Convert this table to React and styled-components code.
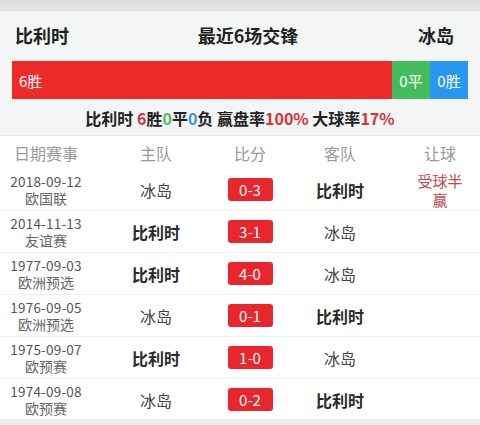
import React from "react";
import styled, { createGlobalStyle } from "styled-components";

const GlobalStyle = createGlobalStyle`
  html, body {
    margin: 0;
    padding: 0;
    background: #ececec;
    font-family: "Noto Sans CJK SC", "Noto Sans", "Liberation Sans", sans-serif;
  }
`;

const matches = [
  { date: "2018-09-12", cup: "欧国联", home: "冰岛", score: "0-3", away: "比利时", winHome: false, handicap: "受球半赢" },
  { date: "2014-11-13", cup: "友谊赛", home: "比利时", score: "3-1", away: "冰岛", winHome: true },
  { date: "1977-09-03", cup: "欧洲预选", home: "比利时", score: "4-0", away: "冰岛", winHome: true },
  { date: "1976-09-05", cup: "欧洲预选", home: "冰岛", score: "0-1", away: "比利时", winHome: false },
  { date: "1975-09-07", cup: "欧预赛", home: "比利时", score: "1-0", away: "冰岛", winHome: true },
  { date: "1974-09-08", cup: "欧预赛", home: "冰岛", score: "0-2", away: "比利时", winHome: false },
];

const Page = styled.div`
  width: 480px;
  height: 425px;
  overflow: hidden;
  background: #ececec;
`;

const TopStrip = styled.div`
  height: 11px;
  background: linear-gradient(#dcdcdc, #e3e3e3);
`;

const Summary = styled.div`
  background: #f4f5f5;
  padding: 11px 12px 6px;
  border-bottom: 1px solid #ebebeb;
`;

const TitleRow = styled.div`
  display: grid;
  grid-template-columns: 1fr auto 1fr;
  align-items: center;
  height: 26px;
  padding: 0 14px 0 3px;
  font-size: 18px;
  font-weight: bold;
  color: #222;

  span:nth-child(2) {
    padding-left: 27px;
  }
  span:last-child {
    text-align: right;
  }
`;

const Bar = styled.div`
  display: flex;
  height: 38px;
  margin-top: 13px;
  color: #fff;
  font-size: 15px;
`;

const Segment = styled.div`
  display: flex;
  align-items: center;
  justify-content: ${(p) => (p.$left ? "flex-start" : "center")};
  padding-left: ${(p) => (p.$left ? "7px" : "0")};
  background: ${(p) => p.$color};
  flex: ${(p) => (p.$grow ? 1 : "none")};
  width: ${(p) => p.$width || "auto"};
`;

const Stats = styled.div`
  text-align: center;
  margin-top: 8px;
  font-size: 16px;
  font-weight: bold;
  color: #222;
  line-height: 22px;
`;

const Num = styled.span`
  color: ${(p) => p.$color};
`;

const Table = styled.div`
  background: #fff;
  display: grid;
  grid-template-columns: 92px 128px 60px 120px 80px;
  height: 283px;
`;

const HeadCell = styled.div`
  height: 33px;
  display: flex;
  align-items: center;
  justify-content: center;
  color: #9a9a9a;
  font-size: 16px;
`;

const Cell = styled.div`
  height: 41px;
  border-top: ${(p) => (p.$first ? "none" : "1px solid #f0f0f0")};
  display: flex;
  flex-direction: column;
  align-items: center;
  justify-content: center;
`;

const DateText = styled.div`
  font-size: 13.5px;
  line-height: 17px;
  color: #555;
  letter-spacing: 0.2px;
`;

const CupText = styled.div`
  font-size: 14px;
  line-height: 17px;
  color: #666;
`;

const Team = styled.div`
  font-size: 16px;
  font-weight: ${(p) => (p.$win ? "bold" : "normal")};
  color: ${(p) => (p.$win ? "#2a2a2a" : "#444")};
`;

const Score = styled.div`
  width: 45px;
  height: 23px;
  border-radius: 3px;
  background: #e8262b;
  color: #fff;
  font-size: 15px;
  display: flex;
  align-items: center;
  justify-content: center;
`;

const Handicap = styled.div`
  width: 52px;
  text-align: center;
  font-size: 15px;
  line-height: 19px;
  color: #bf4a4c;
`;

export default function App() {
  return (
    <Page>
      <GlobalStyle />
      <TopStrip />
      <Summary>
        <TitleRow>
          <span>比利时</span>
          <span>最近6场交锋</span>
          <span>冰岛</span>
        </TitleRow>
        <Bar>
          <Segment $left $grow $color="#ee2a2a">6胜</Segment>
          <Segment $color="#43bd5c" $width="38px">0平</Segment>
          <Segment $color="#2898ee" $width="38px">0胜</Segment>
        </Bar>
        <Stats>
          比利时 <Num $color="#d8333b">6</Num>胜<Num $color="#52b866">0</Num>平
          <Num $color="#3398d9">0</Num>负 赢盘率<Num $color="#d8333b">100%</Num> 大球率
          <Num $color="#d8333b">17%</Num>
        </Stats>
      </Summary>
      <Table>
        <HeadCell>日期赛事</HeadCell>
        <HeadCell>主队</HeadCell>
        <HeadCell>比分</HeadCell>
        <HeadCell>客队</HeadCell>
        <HeadCell>让球</HeadCell>
        {matches.map((m, i) => (
          <React.Fragment key={m.date}>
            <Cell $first={i === 0}>
              <DateText>{m.date}</DateText>
              <CupText>{m.cup}</CupText>
            </Cell>
            <Cell $first={i === 0}>
              <Team $win={m.winHome}>{m.home}</Team>
            </Cell>
            <Cell $first={i === 0}>
              <Score>{m.score}</Score>
            </Cell>
            <Cell $first={i === 0}>
              <Team $win={!m.winHome}>{m.away}</Team>
            </Cell>
            <Cell $first={i === 0}>
              {m.handicap && <Handicap>{m.handicap}</Handicap>}
            </Cell>
          </React.Fragment>
        ))}
      </Table>
    </Page>
  );
}
